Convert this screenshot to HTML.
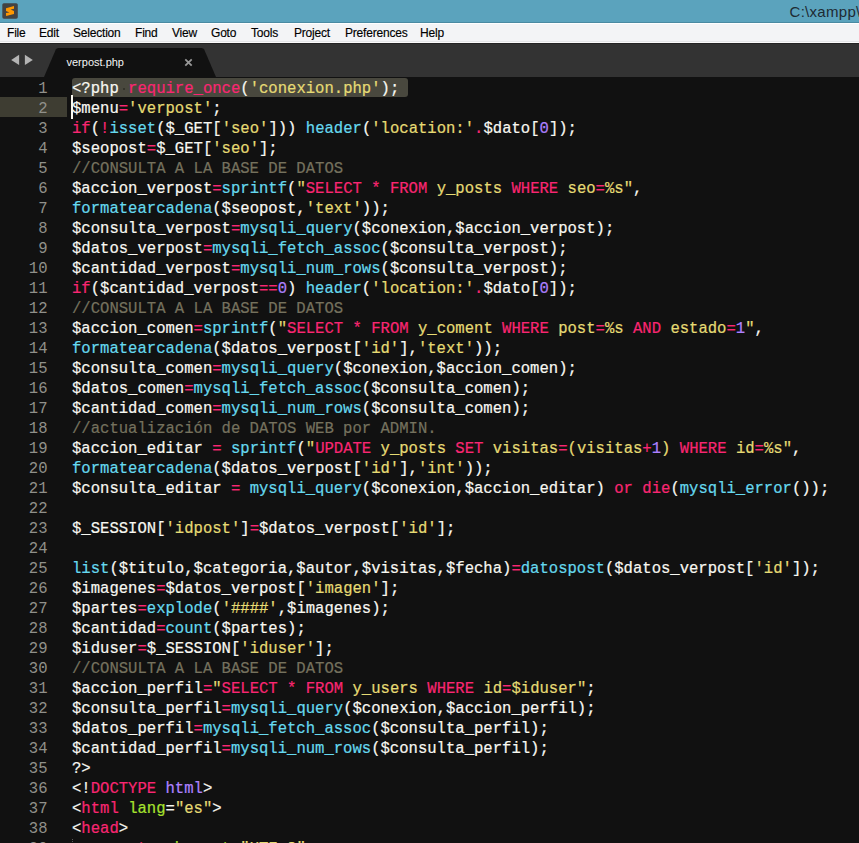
<!DOCTYPE html>
<html><head><meta charset="utf-8">
<style>
*{margin:0;padding:0;box-sizing:border-box}
html,body{width:859px;height:843px;overflow:hidden;background:#111111}
body{position:relative;font-family:"Liberation Sans",sans-serif}
#title{position:absolute;left:0;top:0;width:859px;height:22px;background:#5ba3bd}
#tline{position:absolute;left:0;top:22px;width:859px;height:1px;background:#4a8aa2}
#ttext{position:absolute;left:789.5px;top:3px;font-size:15px;line-height:17px;color:#1e2a33;letter-spacing:0.3px;white-space:nowrap}
#menu{position:absolute;left:0;top:23px;width:859px;height:21px;background:#f3f4f6;border-top:1px solid #ffffff}
#mline1{position:absolute;left:0;top:41px;width:859px;height:1px;background:#e4e5e7}
#mline2{position:absolute;left:0;top:42px;width:859px;height:1px;background:#fbfbfb}
#mline3{position:absolute;left:0;top:43px;width:859px;height:1px;background:#242424}
#menu span{position:absolute;top:2px;font-size:12px;line-height:14px;color:#000;letter-spacing:-0.2px;-webkit-text-stroke:0.15px #000}
#tabs{position:absolute;left:0;top:44px;width:859px;height:33px;background:#333333}
#editor{position:absolute;left:0;top:77px;width:859px;height:766px;background:#111111}
.ln{position:absolute;left:72px;height:20px;line-height:20px;padding-top:1px;font-family:"Liberation Mono",monospace;font-size:15.58px;white-space:pre;color:#f8f8f2;-webkit-text-stroke:0.2px currentColor}
.num{position:absolute;left:0;width:47.5px;height:20px;line-height:20px;padding-top:1px;text-align:right;font-family:"Liberation Mono",monospace;font-size:15.58px;color:#90908a}
.num.cur{width:47.5px}
#gh{position:absolute;left:0;top:97px;width:67px;height:20px;background:#3e3d32}
.w{color:#f8f8f2}.k{color:#f92672}.s{color:#e6db74}.f{color:#66d9ef}.c{color:#75715e}.n{color:#ae81ff}.g{color:#a6e22e}
#sel{position:absolute;left:72px;top:78px;width:336px;height:19px;background:#49483e;border-radius:3px}
#cursor{position:absolute;left:71px;top:95px;width:2px;height:24px;background:#f8f8f0}
#tabname{position:absolute;left:66.5px;top:56px;font-size:11px;line-height:13px;color:#f4f4f4;white-space:nowrap}
#wsdot{position:absolute;left:122.5px;top:87.5px;width:2px;height:2px;background:#34332b}
.ig{position:absolute;left:72px;width:1px;height:1px;background:#5a5a5a}
</style></head><body>
<div id="title"></div><div id="tline"></div>
<svg style="position:absolute;left:0;top:0" width="22" height="22" viewBox="0 0 22 22">
<rect x="2.3" y="3.2" width="15.5" height="15.5" rx="1.6" fill="#434343"/>
<polygon points="14,6 14,8.8 10.6,9.4 14,11 14,13.9 6.1,15.95 6,13.05 9.5,12.5 6,10.97 6,8.15" fill="#ff9800"/>
</svg>
<div id="ttext">C:\xampp\</div>
<div id="menu"><span style="left:7px">File</span><span style="left:39px">Edit</span><span style="left:73px">Selection</span><span style="left:135px">Find</span><span style="left:172px">View</span><span style="left:211px">Goto</span><span style="left:251px">Tools</span><span style="left:294px">Project</span><span style="left:345px">Preferences</span><span style="left:420px">Help</span></div>
<div id="mline1"></div><div id="mline2"></div><div id="mline3"></div>
<div id="tabs"></div>
<svg style="position:absolute;left:0;top:44px" width="859" height="33" viewBox="0 44 859 33">
<polygon points="11.2,59.9 19.1,54.8 19.1,65" fill="#b4b4b4"/>
<polygon points="24.9,54.8 32.8,59.9 24.9,65" fill="#b4b4b4"/>
<path d="M44,77 L55.8,49.5 Q56.5,48 58.5,48 L201.5,48 Q203.5,48 204.2,49.5 L216,77 Z" fill="#111111"/>
<path d="M185.3,59.4 L191.7,65.6 M191.7,59.4 L185.3,65.6" stroke="#989898" stroke-width="1.8"/>
</svg>
<div id="tabname">verpost.php</div>
<div id="editor"></div>
<div id="gh"></div><div id="sel"></div>
<div class="ln" style="top:78px"><span class="w">&lt;?php</span><span class="ws"> </span><span class="k">require_once</span><span class="w">(</span><span class="s">&#x27;conexion.php&#x27;</span><span class="w">);</span></div>
<div class="num" style="top:78px">1</div>
<div class="ln" style="top:98px"><span class="w">$menu</span><span class="k">=</span><span class="s">&#x27;verpost&#x27;</span><span class="w">;</span></div>
<div class="num cur" style="top:98px">2</div>
<div class="ln" style="top:118px"><span class="k">if</span><span class="w">(</span><span class="k">!</span><span class="f">isset</span><span class="w">($_GET[</span><span class="s">&#x27;seo&#x27;</span><span class="w">])) </span><span class="f">header</span><span class="w">(</span><span class="s">&#x27;location:&#x27;</span><span class="k">.</span><span class="w">$dato[</span><span class="n">0</span><span class="w">]);</span></div>
<div class="num" style="top:118px">3</div>
<div class="ln" style="top:138px"><span class="w">$seopost</span><span class="k">=</span><span class="w">$_GET[</span><span class="s">&#x27;seo&#x27;</span><span class="w">];</span></div>
<div class="num" style="top:138px">4</div>
<div class="ln" style="top:158px"><span class="c">//CONSULTA A LA BASE DE DATOS</span></div>
<div class="num" style="top:158px">5</div>
<div class="ln" style="top:178px"><span class="w">$accion_verpost</span><span class="k">=</span><span class="f">sprintf</span><span class="w">(</span><span class="s">&quot;</span><span class="k">SELECT * FROM</span><span class="s"> y_posts </span><span class="k">WHERE</span><span class="s"> seo</span><span class="k">=</span><span class="s">%s&quot;</span><span class="w">,</span></div>
<div class="num" style="top:178px">6</div>
<div class="ln" style="top:198px"><span class="f">formatearcadena</span><span class="w">($seopost,</span><span class="s">&#x27;text&#x27;</span><span class="w">));</span></div>
<div class="num" style="top:198px">7</div>
<div class="ln" style="top:218px"><span class="w">$consulta_verpost</span><span class="k">=</span><span class="f">mysqli_query</span><span class="w">($conexion,$accion_verpost);</span></div>
<div class="num" style="top:218px">8</div>
<div class="ln" style="top:238px"><span class="w">$datos_verpost</span><span class="k">=</span><span class="f">mysqli_fetch_assoc</span><span class="w">($consulta_verpost);</span></div>
<div class="num" style="top:238px">9</div>
<div class="ln" style="top:258px"><span class="w">$cantidad_verpost</span><span class="k">=</span><span class="f">mysqli_num_rows</span><span class="w">($consulta_verpost);</span></div>
<div class="num" style="top:258px">10</div>
<div class="ln" style="top:278px"><span class="k">if</span><span class="w">($cantidad_verpost</span><span class="k">==</span><span class="n">0</span><span class="w">) </span><span class="f">header</span><span class="w">(</span><span class="s">&#x27;location:&#x27;</span><span class="k">.</span><span class="w">$dato[</span><span class="n">0</span><span class="w">]);</span></div>
<div class="num" style="top:278px">11</div>
<div class="ln" style="top:298px"><span class="c">//CONSULTA A LA BASE DE DATOS</span></div>
<div class="num" style="top:298px">12</div>
<div class="ln" style="top:318px"><span class="w">$accion_comen</span><span class="k">=</span><span class="f">sprintf</span><span class="w">(</span><span class="s">&quot;</span><span class="k">SELECT * FROM</span><span class="s"> y_coment </span><span class="k">WHERE</span><span class="s"> post</span><span class="k">=</span><span class="s">%s </span><span class="k">AND</span><span class="s"> estado</span><span class="k">=</span><span class="n">1</span><span class="s">&quot;</span><span class="w">,</span></div>
<div class="num" style="top:318px">13</div>
<div class="ln" style="top:338px"><span class="f">formatearcadena</span><span class="w">($datos_verpost[</span><span class="s">&#x27;id&#x27;</span><span class="w">],</span><span class="s">&#x27;text&#x27;</span><span class="w">));</span></div>
<div class="num" style="top:338px">14</div>
<div class="ln" style="top:358px"><span class="w">$consulta_comen</span><span class="k">=</span><span class="f">mysqli_query</span><span class="w">($conexion,$accion_comen);</span></div>
<div class="num" style="top:358px">15</div>
<div class="ln" style="top:378px"><span class="w">$datos_comen</span><span class="k">=</span><span class="f">mysqli_fetch_assoc</span><span class="w">($consulta_comen);</span></div>
<div class="num" style="top:378px">16</div>
<div class="ln" style="top:398px"><span class="w">$cantidad_comen</span><span class="k">=</span><span class="f">mysqli_num_rows</span><span class="w">($consulta_comen);</span></div>
<div class="num" style="top:398px">17</div>
<div class="ln" style="top:418px"><span class="c">//actualización de DATOS WEB por ADMIN.</span></div>
<div class="num" style="top:418px">18</div>
<div class="ln" style="top:438px"><span class="w">$accion_editar </span><span class="k">=</span><span class="w"> </span><span class="f">sprintf</span><span class="w">(</span><span class="s">&quot;</span><span class="k">UPDATE</span><span class="s"> y_posts </span><span class="k">SET</span><span class="s"> visitas</span><span class="k">=</span><span class="s">(visitas</span><span class="k">+</span><span class="n">1</span><span class="s">) </span><span class="k">WHERE</span><span class="s"> id</span><span class="k">=</span><span class="s">%s&quot;</span><span class="w">,</span></div>
<div class="num" style="top:438px">19</div>
<div class="ln" style="top:458px"><span class="f">formatearcadena</span><span class="w">($datos_verpost[</span><span class="s">&#x27;id&#x27;</span><span class="w">],</span><span class="s">&#x27;int&#x27;</span><span class="w">));</span></div>
<div class="num" style="top:458px">20</div>
<div class="ln" style="top:478px"><span class="w">$consulta_editar </span><span class="k">=</span><span class="w"> </span><span class="f">mysqli_query</span><span class="w">($conexion,$accion_editar) </span><span class="k">or</span><span class="w"> </span><span class="k">die</span><span class="w">(</span><span class="f">mysqli_error</span><span class="w">());</span></div>
<div class="num" style="top:478px">21</div>
<div class="ln" style="top:498px"></div>
<div class="num" style="top:498px">22</div>
<div class="ln" style="top:518px"><span class="w">$_SESSION[</span><span class="s">&#x27;idpost&#x27;</span><span class="w">]</span><span class="k">=</span><span class="w">$datos_verpost[</span><span class="s">&#x27;id&#x27;</span><span class="w">];</span></div>
<div class="num" style="top:518px">23</div>
<div class="ln" style="top:538px"></div>
<div class="num" style="top:538px">24</div>
<div class="ln" style="top:558px"><span class="f">list</span><span class="w">($titulo,$categoria,$autor,$visitas,$fecha)</span><span class="k">=</span><span class="f">datospost</span><span class="w">($datos_verpost[</span><span class="s">&#x27;id&#x27;</span><span class="w">]);</span></div>
<div class="num" style="top:558px">25</div>
<div class="ln" style="top:578px"><span class="w">$imagenes</span><span class="k">=</span><span class="w">$datos_verpost[</span><span class="s">&#x27;imagen&#x27;</span><span class="w">];</span></div>
<div class="num" style="top:578px">26</div>
<div class="ln" style="top:598px"><span class="w">$partes</span><span class="k">=</span><span class="f">explode</span><span class="w">(</span><span class="s">&#x27;####&#x27;</span><span class="w">,$imagenes);</span></div>
<div class="num" style="top:598px">27</div>
<div class="ln" style="top:618px"><span class="w">$cantidad</span><span class="k">=</span><span class="f">count</span><span class="w">($partes);</span></div>
<div class="num" style="top:618px">28</div>
<div class="ln" style="top:638px"><span class="w">$iduser</span><span class="k">=</span><span class="w">$_SESSION[</span><span class="s">&#x27;iduser&#x27;</span><span class="w">];</span></div>
<div class="num" style="top:638px">29</div>
<div class="ln" style="top:658px"><span class="c">//CONSULTA A LA BASE DE DATOS</span></div>
<div class="num" style="top:658px">30</div>
<div class="ln" style="top:678px"><span class="w">$accion_perfil</span><span class="k">=</span><span class="s">&quot;</span><span class="k">SELECT * FROM</span><span class="s"> y_users </span><span class="k">WHERE</span><span class="s"> id</span><span class="k">=</span><span class="s">$iduser&quot;</span><span class="w">;</span></div>
<div class="num" style="top:678px">31</div>
<div class="ln" style="top:698px"><span class="w">$consulta_perfil</span><span class="k">=</span><span class="f">mysqli_query</span><span class="w">($conexion,$accion_perfil);</span></div>
<div class="num" style="top:698px">32</div>
<div class="ln" style="top:718px"><span class="w">$datos_perfil</span><span class="k">=</span><span class="f">mysqli_fetch_assoc</span><span class="w">($consulta_perfil);</span></div>
<div class="num" style="top:718px">33</div>
<div class="ln" style="top:738px"><span class="w">$cantidad_perfil</span><span class="k">=</span><span class="f">mysqli_num_rows</span><span class="w">($consulta_perfil);</span></div>
<div class="num" style="top:738px">34</div>
<div class="ln" style="top:758px"><span class="w">?&gt;</span></div>
<div class="num" style="top:758px">35</div>
<div class="ln" style="top:778px"><span class="w">&lt;!</span><span class="k">DOCTYPE</span><span class="w"> </span><span class="n">html</span><span class="w">&gt;</span></div>
<div class="num" style="top:778px">36</div>
<div class="ln" style="top:798px"><span class="w">&lt;</span><span class="k">html</span><span class="w"> </span><span class="g">lang</span><span class="w">=</span><span class="s">&quot;es&quot;</span><span class="w">&gt;</span></div>
<div class="num" style="top:798px">37</div>
<div class="ln" style="top:818px"><span class="w">&lt;</span><span class="k">head</span><span class="w">&gt;</span></div>
<div class="num" style="top:818px">38</div>
<div class="ln" style="top:838px"><span class="w">    &lt;</span><span class="k">meta</span><span class="w"> </span><span class="g">charset</span><span class="w">=</span><span class="s">&quot;UTF-8&quot;</span><span class="w">&gt;</span></div>
<div class="num" style="top:838px">39</div>
<div id="wsdot"></div><div class="ig" style="top:839px"></div><div class="ig" style="top:841px"></div>
<div id="cursor"></div>
</body></html>
